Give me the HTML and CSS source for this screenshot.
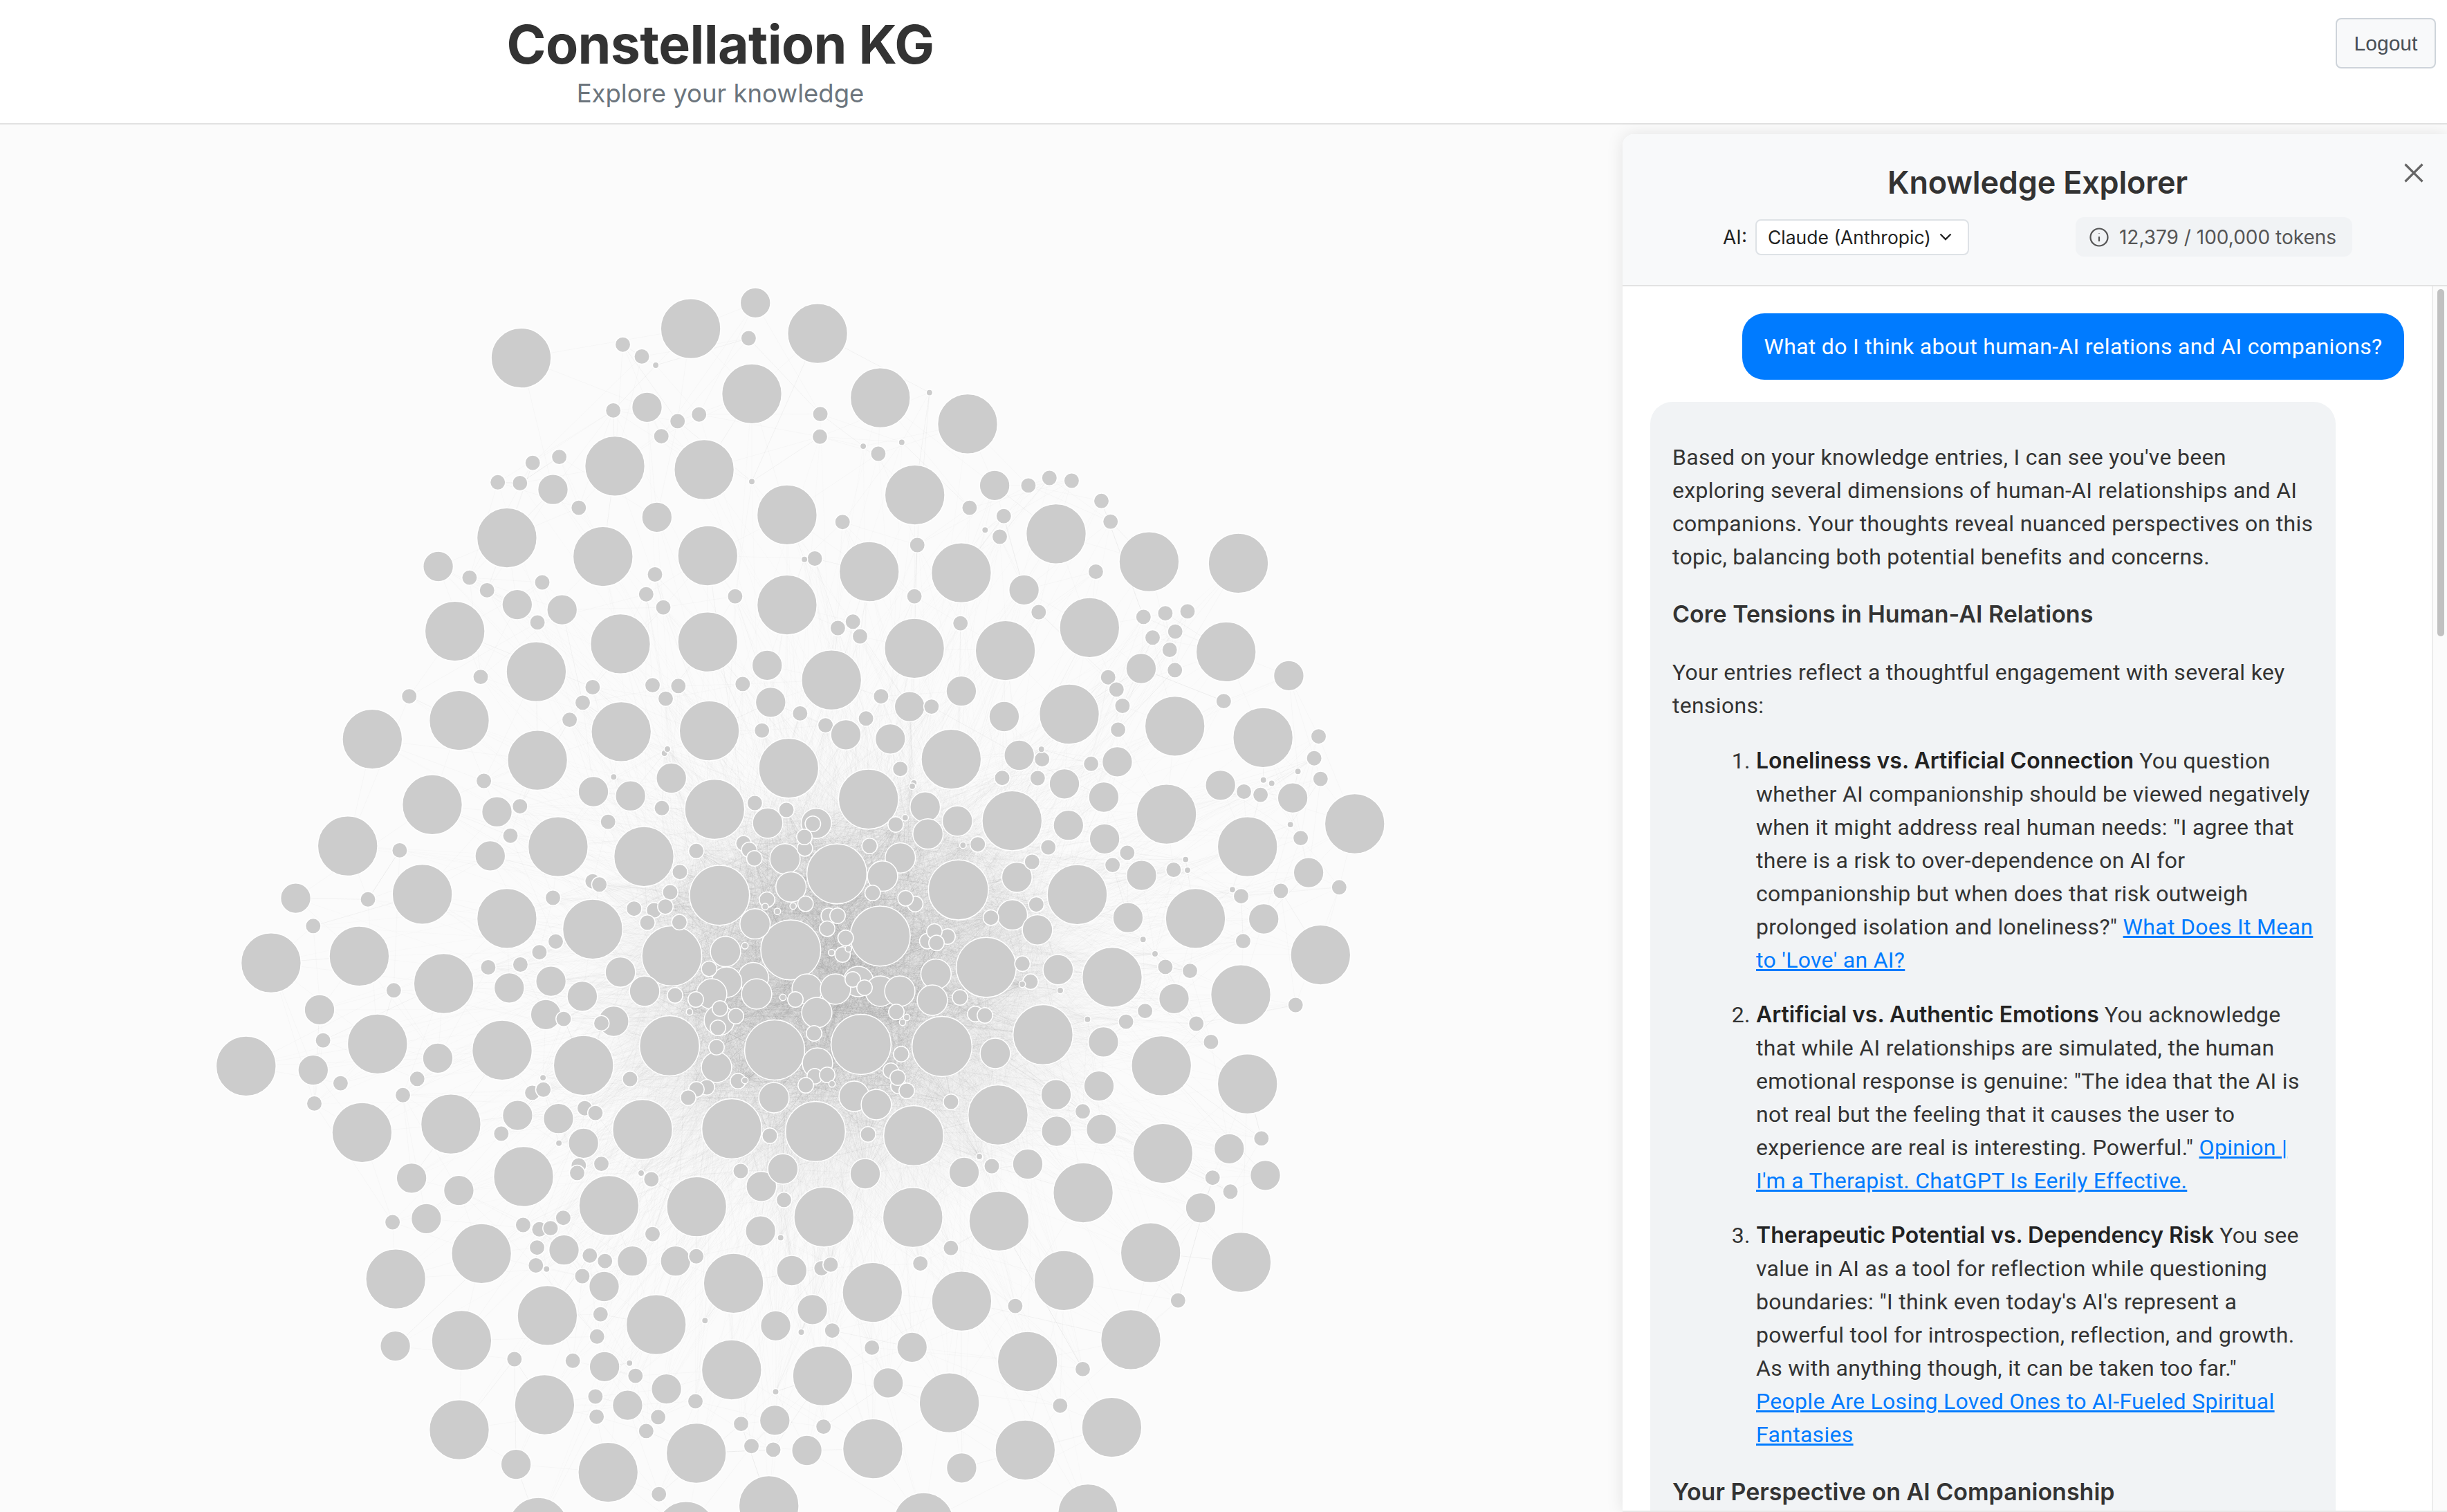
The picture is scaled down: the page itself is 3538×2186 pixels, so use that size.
FILE: index.html
```html
<!DOCTYPE html>
<html lang="en">
<head>
<meta charset="utf-8">
<title>Constellation KG</title>
<link rel="stylesheet" href="styles.css">
</head>
<body>
<div class="app">
  <header class="topbar">
    <div class="brand">
      <h1 class="brand-title">Constellation KG</h1>
      <p class="brand-sub">Explore your knowledge</p>
    </div>
    <button class="logout">Logout</button>
  </header>
  <main class="workspace">
    <div class="graph-pane">
      <svg class="graph" viewBox="0 180 2346 2006" xmlns="http://www.w3.org/2000/svg">
        <defs>
          <radialGradient id="haze">
            <stop offset="0" class="haze-a"/>
            <stop offset="0.55" class="haze-b"/>
            <stop offset="1" class="haze-c"/>
          </radialGradient>
        </defs>
        <ellipse cx="1225" cy="1440" rx="400" ry="340" fill="url(#haze)"/>
        <g id="edges"></g>
        <g id="nodes"></g>
      </svg>
    </div>
    <aside class="panel">
      <div class="panel-head">
        <h2 class="panel-title">Knowledge Explorer</h2>
        <button class="close" aria-label="Close">
          <svg viewBox="0 0 28 28" width="28" height="28"><path d="M1.5 1.5 26.5 26.5M26.5 1.5 1.5 26.5"/></svg>
        </button>
        <div class="panel-tools">
          <div class="ai-pick">
            <span class="ai-label">AI:</span>
            <div class="select">
              <span>Claude (Anthropic)</span>
              <svg viewBox="0 0 18 11" width="18" height="11"><path d="M1.500 1.500 9 9l7.500-7.500"/></svg>
            </div>
          </div>
          <div class="tokens">
            <svg viewBox="0 0 28 28" width="28" height="28"><circle cx="14" cy="14" r="12.500"/><path d="M14 13v7M14 8.500v.5"/></svg>
            <span>12,379 / 100,000 tokens</span>
          </div>
        </div>
      </div>
      <div class="panel-body">
        <div class="chat">
          <div class="msg-user">What do I think about human-AI relations and AI companions?</div>
          <div class="msg-ai">
            <p>Based on your knowledge entries, I can see you've been exploring several dimensions of human-AI relationships and AI companions. Your thoughts reveal nuanced perspectives on this topic, balancing both potential benefits and concerns.</p>
            <h3>Core Tensions in Human-AI Relations</h3>
            <p>Your entries reflect a thoughtful engagement with several key tensions:</p>
            <ol>
              <li><strong>Loneliness vs. Artificial Connection</strong> You question whether AI companionship should be viewed negatively when it might address real human needs: "I agree that there is a risk to over-dependence on AI for companionship but when does that risk outweigh prolonged isolation and loneliness?" <a href="#">What Does It Mean to 'Love' an AI?</a></li>
              <li><strong>Artificial vs. Authentic Emotions</strong> You acknowledge that while AI relationships are simulated, the human emotional response is genuine: "The idea that the AI is not real but the feeling that it causes the user to experience are real is interesting. Powerful." <a href="#">Opinion | I'm a Therapist. ChatGPT Is Eerily Effective.</a></li>
              <li><strong>Therapeutic Potential vs. Dependency Risk</strong> You see value in AI as a tool for reflection while questioning boundaries: "I think even today's AI's represent a powerful tool for introspection, reflection, and growth. As with anything though, it can be taken too far."<br><a href="#">People Are Losing Loved Ones to AI-Fueled Spiritual Fantasies</a></li>
            </ol>
            <h3>Your Perspective on AI Companionship</h3>
          </div>
        </div>
        <div class="scroll-track"><div class="scroll-thumb"></div></div>
      </div>
    </aside>
  </main>
</div>
<script src="graph.js"></script>
</body>
</html>
```
FILE: styles.css
```css
* { box-sizing: border-box; }
html, body { margin: 0; height: 100%; overflow: hidden; }
body { font-family: Inter, "Noto Sans", sans-serif; color: #333; background: #fff; }
.app { height: 100vh; display: flex; flex-direction: column; }

.topbar { height: 180px; flex: none; display: flex; justify-content: space-between; align-items: flex-start; border-bottom: 2px solid #e2e2e2; background: #fff; padding-right: 16px; }
.brand { width: 2083px; text-align: center; padding-top: 16px; }
.brand-title { margin: 0; font-size: 77px; line-height: 96px; font-weight: 700; color: #333; letter-spacing: -0.6px; }
.brand-sub { margin: 0; font-size: 36.500px; line-height: 48px; color: #6c757d; margin-top: -1px; }
.logout { margin-top: 26px; width: 145px; height: 73px; padding: 0; border: 2px solid #ced4da; border-radius: 8px; background: #f8f9fa; color: #495057; font-family: "Liberation Sans", Arial, sans-serif; font-size: 30px; }

.workspace { flex: 1; min-height: 0; display: flex; background: #fbfbfb; }
.graph-pane { flex: 1; min-width: 0; overflow: hidden; }
.graph { display: block; width: 100%; height: 100%; }
.haze-a { stop-color: #000; stop-opacity: .05; }
.haze-b { stop-color: #000; stop-opacity: .035; }
.haze-c { stop-color: #000; stop-opacity: 0; }
.edge { stroke: #999; stroke-opacity: .05; stroke-width: 1; }
.edge-fan { stroke: #999; stroke-opacity: .03; stroke-width: 1; }
.node { fill: #ccc; stroke: #fff; stroke-width: 1.5; }
.node-b { r: 43.4px; }
.node-m { r: 21.9px; }
.node-s { r: 11.2px; }
.node-t { r: 4.700px; }

.panel { width: 1192px; flex: none; margin-top: 14px; display: flex; flex-direction: column; background: #fff; border-radius: 16px 0 0 0; border-bottom: 2px solid #e8e8e8; box-shadow: 0 0 24px rgba(0, 0, 0, .1); overflow: hidden; position: relative; }
.panel-head { height: 220px; flex: none; background: #f8f9fa; border-bottom: 2px solid #e2e2e2; padding: 41px 0 0 8px; text-align: center; }
.panel-title { margin: 0; font-size: 45px; line-height: 58px; font-weight: 600; color: #333; letter-spacing: -0.2px; }
.close { position: absolute; top: 42px; right: 34px; width: 28px; height: 28px; padding: 0; border: 0; background: none; }
.close svg { display: block; fill: none; stroke: #666; stroke-width: 3.200; }
.panel-tools { display: flex; justify-content: center; align-items: center; gap: 154px; margin-top: 21px; }
.ai-pick { display: flex; align-items: center; gap: 12px; font-size: 28px; color: #222; }
.select { width: 309px; height: 52px; display: flex; align-items: center; justify-content: space-between; padding: 0 23px 0 16px; background: #fff; border: 2px solid #dee2e6; border-radius: 8px; color: #222; font-size: 26.500px; white-space: nowrap; }
.select svg { fill: none; stroke: #222; stroke-width: 2.400; }
.tokens { width: 400px; height: 57px; display: flex; align-items: center; gap: 15px; padding: 0 20px; background: #f1f3f5; border-radius: 12px; font-size: 28px; color: #555; white-space: nowrap; }
.tokens svg { flex: none; fill: none; stroke: #555; stroke-width: 2.200; }

.panel-body { flex: 1; min-height: 0; display: flex; }
.chat { flex: 1; min-width: 0; padding: 39px 40px 0; display: flex; flex-direction: column; align-items: flex-start; gap: 32px; overflow: hidden; font-family: Roboto, Inter, sans-serif; font-size: 32px; letter-spacing: .3px; line-height: 48px; }
.msg-user { flex: none; align-self: flex-end; height: 96px; width: 957px; display: flex; align-items: center; justify-content: center; background: #007bff; color: #fff; border-radius: 32px; white-space: nowrap; }
.msg-ai { flex: none; width: 991px; padding: 24px 32px; background: #f1f3f5; border-radius: 32px; color: #333; }
.msg-ai p { margin: 32px 0; }
.msg-ai h3 { margin: 36.500px 0 38.500px; font-family: Inter, sans-serif; font-size: 34px; line-height: 44px; font-weight: 600; letter-spacing: 0; color: #333; }
.msg-ai ol { margin: 32px 0; padding: 0 0 0 121px; }
.msg-ai li { margin-bottom: 31px; }
.msg-ai strong { font-family: Inter, sans-serif; font-weight: 600; letter-spacing: 0; color: #222; }
.msg-ai a { color: #007bff; text-decoration: underline; }
.scroll-track { width: 22px; flex: none; background: #fbfbfb; border-left: 2px solid #ececec; padding: 4px 4px 0 6px; }
.scroll-thumb { height: 502px; background: #c1c1c1; border-radius: 5px; }
```
FILE: graph.js
```js
var GROUPS = [
  { o: [280, 400], k: 1.7422,
    b: [825,205,1252,131,1406,295,1061,477,1286,486,789,658,1031,705,1295,703,658,893,863,995,1075,925,1295,920,669,1118,450,1165,866,1218,1077,1146,601,1330,388,1434,918,1436,1299,1144],
    m: [1415,66,1142,329,905,536,1167,606,616,730,815,826,928,839,1007,1297,764,1348,747,1459],
    s: [1398,155,1081,171,1129,201,1057,337,1219,364,1273,347,1178,402,854,469,921,454,766,518,822,520,970,582,695,758,739,790,878,770,1162,750,1140,800,1183,833,1364,805,866,871,723,1008,543,1057,1005,1034,980,1073,947,1116,1156,1029,1221,1031,1189,1063,1383,1026,731,1270,822,1334,798,1408,519,1445,1044,1373,1005,1523,1022,1531],
    t: [1164,223,1406,516,1058,1260] },
  { o: [1100, 400], k: 1.7422,
    b: [143,143,301,305,521,371,388,550,66,600,744,648,978,718,1203,722,273,743,505,746,66,827,828,884,387,936,616,942,1172,945,178,1016,1043,1132,777,1102,1265,1161,1022,1354,1226,1436,1496,1378],
    m: [589,526,663,789,958,987,1330,1005,505,1044,375,1083,613,1108,25,1072,16,979,898,1222,864,1311,866,1416,1158,1281,1340,1313,959,1508,1380,1501,775,1382],
    s: [150,346,149,403,296,446,206,618,136,710,526,582,612,603,602,655,674,526,727,507,783,514,858,565,881,617,394,676,844,743,387,805,700,845,503,873,194,885,232,869,250,906,964,857,1019,848,1075,843,1044,894,987,909,1030,940,1043,991,875,1009,896,1040,911,1081,900,1141,1166,1069,1405,1158,1394,1213,1410,1265,303,1057,430,1083,265,1113,163,1130,99,1100,3,1143,832,1227,1217,1297,1259,1305,1360,1414,1040,1494,1457,1538,923,1451,886,1482,1310,1547],
    t: [425,292,258,427,355,417,565,638,110,712,1353,1246,1266,1268,1287,1276,1334,1380,1070,1468,1075,1495,1188,1544] },
  { o: [280, 1290], k: 1.7422,
    b: [576,5,789,66,1005,93,195,178,417,161,630,230,777,398,463,382,132,438,982,436,648,584,424,605,831,716,1046,789,1267,792,725,910,509,974,1360,985,891,1066,1165,1089,675,1129,1355,1203,884,1291,669,1354,1266,1413,1044,1461,1449,1545,868,1600,1240,1610],
    m: [257,15,1075,201,900,224,795,241,979,262,887,308,1058,325,317,296,301,448,615,418,816,562,919,570,982,632,549,720,668,751,586,822,1428,853,933,901,1105,929,1214,929,1034,993,1035,1195,1191,1251,1093,1292,508,1143,812,1441,1466,1092,1464,1330,1430,741],
    s: [301,85,439,18,905,14,912,124,871,151,823,182,742,189,504,247,326,373,370,481,304,532,563,470,527,511,853,505,881,497,932,319,1027,330,985,544,1012,556,775,608,970,688,966,707,1027,684,1153,723,830,838,871,849,899,846,931,820,865,895,862,940,998,915,1036,929,1266,917,1156,861,979,967,501,831,1025,1063,1016,1119,808,1176,955,1180,1113,1218,1012,1270,1015,1321,1170,1322,1140,1357,1264,1282,1379,1339,1405,1395,1460,1404,1172,1516,1487,775],
    t: [880,467,920,632,1128,709,889,949,1288,1079,1098,1186,1466,1258] },
  { o: [1100, 1290], k: 1.7422,
    b: [885,214,1095,66,1209,258,1410,158,1009,437,1226,483,1013,658,812,757,383,819,159,818,600,828,1210,932,982,908,764,978,281,1008,506,1030,932,1127,156,1218,672,1182,475,1286,884,1348,282,1402,666,1405,824,1566,410,1588,797,6],
    m: [1267,67,925,64,863,377,749,195,852,488,744,510,745,602,858,597,1041,268,1180,646,1271,713,1108,795,78,953,130,1051,381,1146,321,1236,116,1406,506,1450],
    s: [1215,123,1210,10,1019,188,1081,198,968,299,920,326,1097,331,1134,377,1347,284,811,552,479,896,402,935,153,947,176,938,641,1042,1051,1028,1138,719,1183,754,1261,620,180,1104,280,1147,811,1201,754,1293,158,1346],
    t: [963,119,993,155,823,320,551,668,50,870,102,1108] },
  { o: [900, 1060], k: 3,
    b: [721,152,400,330,93,535,421,703,730,940,214,966],
    m: [212,195,35,272,630,390,841,391,705,545,731,667,575,827,568,1060,447,947,452,1080],
    s: [171,325,574,303,711,333,826,393,791,500,789,450,525,478,550,506,572,543,627,722,794,740,249,602,320,511,207,690,50,761,137,768,186,752,108,822,247,820,376,1022],
    t: [619,752,672,773,740,750,531,922,182,87,195,69] },
  { o: [1180, 1060], k: 3,
    b: [227,286,586,113,850,380,90,610,617,680,278,880,738,1016],
    m: [129,7,322,25,881,96,1077,220,473,320,485,437,613,381,365,541,288,620,871,625,851,788,960,853,520,1045],
    s: [980,113,365,155,807,194,961,195,345,396,232,489,245,693,430,741,388,716,701,482,1007,495,937,558,955,743,758,800,55,792,93,792,48,848,128,888,115,960,570,882,482,902,513,860,522,910,895,1000,930,1078],
    t: [977,70,424,216,417,230,386,367,637,486,67,952,140,935] },
  { o: [0, 0], k: 1,
    b: [968,1512,1120,1518,1245,1510,1362,1513,1508,1496,1443,1612,929,1633,1058,1632,1179,1636,1321,1642],
    m: [932,1433,1029,1437,1094,1437,1167,1430,1241,1419,1208,1430,1273,1433,1301,1433,1348,1446,1181,1464,1040,1475,1182,1537,1036,1543,1119,1587,1235,1585,1267,1597,1439,1523,1132,1690,1251,1697,1394,1695,1486,1683],
    s: [976,1439,1006,1445,1233,1416,1250,1428,1388,1442,1150,1445,1296,1463,1410,1466,1424,1468,1177,1494,1041,1458,1064,1469,1038,1486,1036,1514,1303,1524,1178,1556,1196,1554,1165,1569,1067,1563,1022,1572,1007,1575,995,1587,911,1560,1288,1548,1299,1570,1298,1558,1311,1577,1375,1593,1113,1642,1255,1640,1071,1693,1434,1686],
    t: [997,1463,1132,1442,1311,1471,1305,1478,1203,1567,1077,1562,1478,1423,1533,1432,927,1696,1416,1672] }
];

var SVG_NS = 'http://www.w3.org/2000/svg';
var nodesLayer = document.getElementById('nodes');
var edgesLayer = document.getElementById('edges');
var all = [];

GROUPS.forEach(function (g) {
  ['b', 'm', 's', 't'].forEach(function (size) {
    var flat = g[size];
    for (var i = 0; i < flat.length; i += 2) {
      var x = g.o[0] + flat[i] / g.k;
      var y = g.o[1] + flat[i + 1] / g.k;
      var c = document.createElementNS(SVG_NS, 'circle');
      c.setAttribute('class', 'node node-' + size);
      c.setAttribute('cx', x.toFixed(1));
      c.setAttribute('cy', y.toFixed(1));
      nodesLayer.appendChild(c);
      all.push({ x: x, y: y, d: Math.hypot(x - 1225, y - 1430) });
    }
  });
});

var seed = 20240611;
function rnd() {
  seed = (Math.imul(seed, 1664525) + 1013904223) >>> 0;
  return seed / 4294967296;
}
function edge(a, b, cls) {
  var l = document.createElementNS(SVG_NS, 'line');
  l.setAttribute('class', cls);
  l.setAttribute('x1', a.x.toFixed(1));
  l.setAttribute('y1', a.y.toFixed(1));
  l.setAttribute('x2', b.x.toFixed(1));
  l.setAttribute('y2', b.y.toFixed(1));
  edgesLayer.appendChild(l);
}
var inner = all.filter(function (n) { return n.d < 300; });
all.forEach(function (n) {
  var near = all.filter(function (m) { return m !== n; }).sort(function (p, q) {
    return Math.hypot(p.x - n.x, p.y - n.y) - Math.hypot(q.x - n.x, q.y - n.y);
  }).slice(0, 16);
  for (var i = 0; i < 3; i++) edge(n, near[Math.floor(rnd() * near.length)], 'edge');
  var fan = Math.round(50 * Math.exp(-Math.pow(n.d / 430, 2)));
  for (var j = 0; j < fan; j++) edge(n, inner[Math.floor(rnd() * inner.length)], 'edge-fan');
});
```
